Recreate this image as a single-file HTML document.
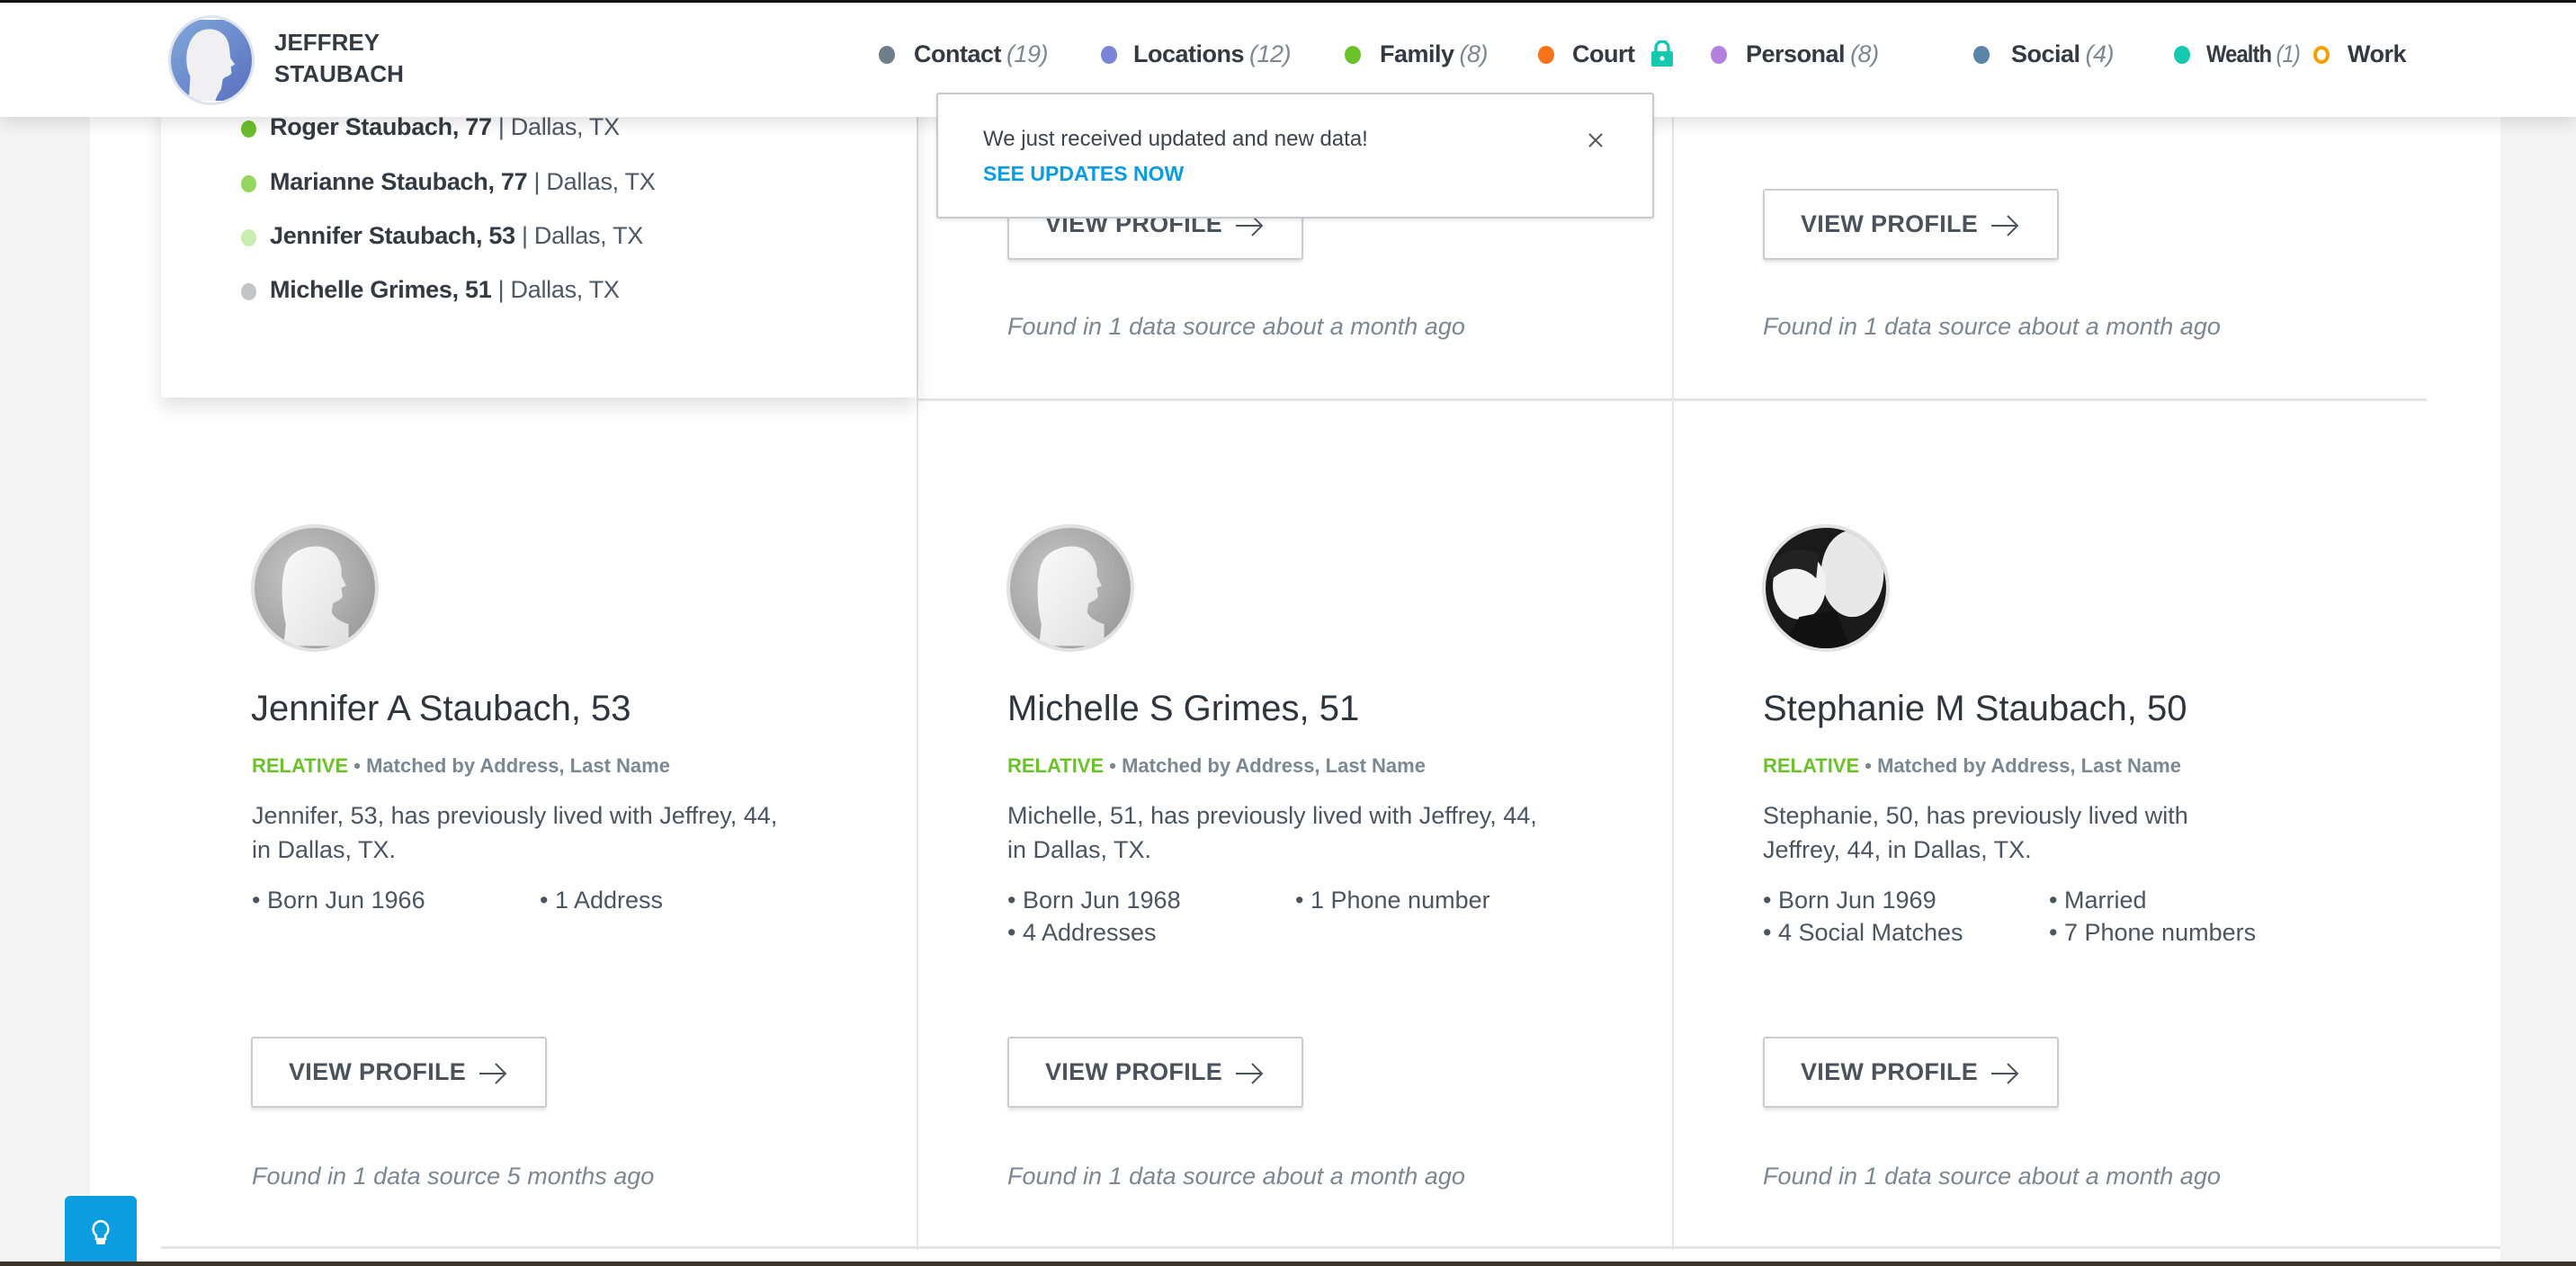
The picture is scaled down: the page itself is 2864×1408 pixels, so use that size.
<!DOCTYPE html>
<html><head><meta charset="utf-8">
<style>
*{margin:0;padding:0;box-sizing:border-box}
body{width:2864px;height:1408px;overflow:hidden;background:#f4f4f4;font-family:"Liberation Sans",sans-serif;position:relative;color:#333a42}
.abs{position:absolute}
#card{left:100px;top:0;width:2680px;height:1408px;background:#fff}
#hdr{left:0;top:0;width:2864px;height:130px;background:#fff;border-top:3px solid #111;box-shadow:0 6px 18px rgba(0,0,0,.13);z-index:5}
.nav{position:absolute;top:42px;font-size:27px;font-weight:bold;color:#333a42;white-space:nowrap;letter-spacing:-0.5px}
.nav i{font-weight:normal;color:#7b8791;margin-left:6px}
.dot{position:absolute;top:48px;width:18px;height:20px;border-radius:50%}
.name{font-size:26px;font-weight:bold;line-height:35px;color:#333a42}
#list{left:179px;top:100px;width:840px;height:342px;background:#fff;box-shadow:0 10px 20px rgba(0,0,0,.12);z-index:2}
.li{position:absolute;left:121px;font-size:27px;white-space:nowrap;color:#333a42;letter-spacing:-0.3px}
.li b{font-weight:bold}
.li span{color:#4d5864}
.ld{position:absolute;left:89px;width:17px;height:19px;border-radius:50%}
.vline{position:absolute;width:2px;background:#e6e6e6}
.hline{position:absolute;height:3px;background:#e4e4e4}
.btn{position:absolute;width:329px;height:79px;border:2px solid #c9ccd0;border-radius:3px;box-shadow:0 3px 3px rgba(0,0,0,.1);background:#fff;font-size:27px;font-weight:bold;color:#4a525c;line-height:75px;padding-left:40px;letter-spacing:.3px}
.btn svg{position:absolute;right:42px;top:26px}
.found{position:absolute;font-size:27px;font-style:italic;color:#7b8791;white-space:nowrap}
.pn{position:absolute;font-size:40px;color:#2f353c;white-space:nowrap}
.rel{position:absolute;font-size:22px;font-weight:bold;color:#7b8791;white-space:nowrap}
.rel b{color:#6cc22a}
.desc{position:absolute;font-size:27px;line-height:38px;color:#4a5560;width:600px}
.bul{position:absolute;font-size:27px;color:#4a5560;white-space:nowrap}
.av{position:absolute;width:142px;height:142px;border-radius:50%;overflow:hidden;border:4px solid #e2e2e2}
</style></head><body>
<div id="card" class="abs"></div>
<div class="vline" style="left:1019px;top:130px;height:1260px"></div>
<div class="vline" style="left:1859px;top:130px;height:1260px"></div>
<div class="hline" style="left:1019px;top:443px;width:1679px"></div>
<div class="hline" style="left:179px;top:1386px;width:2601px"></div>

<div id="list" class="abs">
 <div class="ld" style="top:34px;background:#6cbf2a"></div><div class="li" style="top:26px"><b>Roger Staubach, 77</b> <span>| Dallas, TX</span></div>
 <div class="ld" style="top:95px;background:#95d65e"></div><div class="li" style="top:87px"><b>Marianne Staubach, 77</b> <span>| Dallas, TX</span></div>
 <div class="ld" style="top:155px;background:#c8edb0"></div><div class="li" style="top:147px"><b>Jennifer Staubach, 53</b> <span>| Dallas, TX</span></div>
 <div class="ld" style="top:215px;background:#c2c5c8"></div><div class="li" style="top:207px"><b>Michelle Grimes, 51</b> <span>| Dallas, TX</span></div>
</div>

<div class="btn" style="left:1120px;top:210px">VIEW PROFILE<svg width="32" height="26" viewBox="0 0 32 26"><path d="M1 13H30M19 2L30 13L19 24" fill="none" stroke="#4a525c" stroke-width="2"/></svg></div>
<div class="found" style="left:1120px;top:348px">Found in 1 data source about a month ago</div>
<div class="btn" style="left:1960px;top:210px">VIEW PROFILE<svg width="32" height="26" viewBox="0 0 32 26"><path d="M1 13H30M19 2L30 13L19 24" fill="none" stroke="#4a525c" stroke-width="2"/></svg></div>
<div class="found" style="left:1960px;top:348px">Found in 1 data source about a month ago</div>

<svg width="0" height="0" style="position:absolute"><defs>
<radialGradient id="gg" cx="40%" cy="40%" r="70%"><stop offset="0" stop-color="#c8c8c8"/><stop offset="1" stop-color="#9a9a9a"/></radialGradient>
<linearGradient id="sg" x1="0" y1="0" x2="1" y2="1"><stop offset="0" stop-color="#fafafa"/><stop offset="1" stop-color="#e0e0e0"/></linearGradient>
</defs></svg>

<div class="av" style="left:279px;top:583px"><svg width="134" height="134" viewBox="0 0 100 100"><rect width="100" height="100" fill="url(#gg)"/><path d="M24 98 L26 80 C22 64 22 45 25 33 C29 16 52 12 62 18 C70 23 73 32 72 40 L76 48 L72 50 L73 57 C71 61 67 61 65 63 L64 70 C66 75 72 78 78 80 L78 98 Z" fill="url(#sg)"/></svg></div>
<div class="av" style="left:1119px;top:583px"><svg width="134" height="134" viewBox="0 0 100 100"><rect width="100" height="100" fill="url(#gg)"/><path d="M24 98 L26 80 C22 64 22 45 25 33 C29 16 52 12 62 18 C70 23 73 32 72 40 L76 48 L72 50 L73 57 C71 61 67 61 65 63 L64 70 C66 75 72 78 78 80 L78 98 Z" fill="url(#sg)"/></svg></div>
<div class="av" style="left:1959px;top:583px"><svg width="134" height="134" viewBox="0 0 100 100"><rect width="100" height="100" fill="#1a1a1a"/><ellipse cx="72" cy="38" rx="26" ry="36" fill="#e8e8e8"/><ellipse cx="28" cy="48" rx="22" ry="28" fill="#f2f2f2"/><path d="M4 34 C10 18 30 14 44 22 L42 42 C30 30 16 32 4 44Z" fill="#222"/><path d="M14 100 L28 74 L58 68 L70 100Z" fill="#111"/></svg></div>

<div class="pn" style="left:279px;top:766px">Jennifer A Staubach, 53</div>
<div class="pn" style="left:1120px;top:766px">Michelle S Grimes, 51</div>
<div class="pn" style="left:1960px;top:766px">Stephanie M Staubach, 50</div>

<div class="rel" style="left:280px;top:839px"><b>RELATIVE</b> • Matched by Address, Last Name</div>
<div class="rel" style="left:1120px;top:839px"><b>RELATIVE</b> • Matched by Address, Last Name</div>
<div class="rel" style="left:1960px;top:839px"><b>RELATIVE</b> • Matched by Address, Last Name</div>

<div class="desc" style="left:280px;top:888px">Jennifer, 53, has previously lived with Jeffrey, 44, in Dallas, TX.</div>
<div class="desc" style="left:1120px;top:888px">Michelle, 51, has previously lived with Jeffrey, 44, in Dallas, TX.</div>
<div class="desc" style="left:1960px;top:888px;width:560px">Stephanie, 50, has previously lived with Jeffrey, 44, in Dallas, TX.</div>

<div class="bul" style="left:280px;top:986px">• Born Jun 1966</div>
<div class="bul" style="left:600px;top:986px">• 1 Address</div>
<div class="bul" style="left:1120px;top:986px">• Born Jun 1968</div>
<div class="bul" style="left:1440px;top:986px">• 1 Phone number</div>
<div class="bul" style="left:1120px;top:1022px">• 4 Addresses</div>
<div class="bul" style="left:1960px;top:986px">• Born Jun 1969</div>
<div class="bul" style="left:2278px;top:986px">• Married</div>
<div class="bul" style="left:1960px;top:1022px">• 4 Social Matches</div>
<div class="bul" style="left:2278px;top:1022px">• 7 Phone numbers</div>

<div class="btn" style="left:279px;top:1153px">VIEW PROFILE<svg width="32" height="26" viewBox="0 0 32 26"><path d="M1 13H30M19 2L30 13L19 24" fill="none" stroke="#4a525c" stroke-width="2"/></svg></div>
<div class="btn" style="left:1120px;top:1153px">VIEW PROFILE<svg width="32" height="26" viewBox="0 0 32 26"><path d="M1 13H30M19 2L30 13L19 24" fill="none" stroke="#4a525c" stroke-width="2"/></svg></div>
<div class="btn" style="left:1960px;top:1153px">VIEW PROFILE<svg width="32" height="26" viewBox="0 0 32 26"><path d="M1 13H30M19 2L30 13L19 24" fill="none" stroke="#4a525c" stroke-width="2"/></svg></div>

<div class="found" style="left:280px;top:1293px">Found in 1 data source 5 months ago</div>
<div class="found" style="left:1120px;top:1293px">Found in 1 data source about a month ago</div>
<div class="found" style="left:1960px;top:1293px">Found in 1 data source about a month ago</div>

<div id="hdr" class="abs">
 <div style="position:absolute;left:187px;top:14px;width:96px;height:100px;border-radius:50%;overflow:hidden;border:3px solid #dfe3ea">
  <svg width="90" height="94" viewBox="0 0 100 100"><defs><linearGradient id="bg" x1="0" y1="0" x2="1" y2="1"><stop offset="0" stop-color="#7fa8d8"/><stop offset="1" stop-color="#5a6fc0"/></linearGradient></defs><rect width="100" height="100" fill="url(#bg)"/><path d="M22 100 L24 70 C16 55 18 30 30 18 C42 8 60 10 68 22 C74 32 72 42 74 48 L79 55 L74 58 L75 66 C72 70 66 70 64 74 L62 86 C58 92 56 96 55 100Z" fill="#f0f0f2"/></svg>
 </div>
 <div class="name" style="position:absolute;left:305px;top:27px">JEFFREY<br>STAUBACH</div>
 <div class="dot" style="left:977px;background:#6f7f8a"></div><div class="nav" style="left:1016px">Contact<i>(19)</i></div>
 <div class="dot" style="left:1224px;background:#7b85d8"></div><div class="nav" style="left:1260px">Locations<i>(12)</i></div>
 <div class="dot" style="left:1495px;background:#6cc22a"></div><div class="nav" style="left:1534px">Family<i>(8)</i></div>
 <div class="dot" style="left:1710px;background:#f97316"></div><div class="nav" style="left:1748px">Court</div>
 <svg style="position:absolute;left:1835px;top:42px" width="26" height="30" viewBox="0 0 26 30"><path d="M6 13V8a7 7 0 0 1 14 0v5" fill="none" stroke="#14c9b0" stroke-width="3.5"/><rect x="1" y="12" width="24" height="17" rx="2" fill="#14c9b0"/><circle cx="13" cy="20" r="2.5" fill="#fff"/></svg>
 <div class="dot" style="left:1902px;background:#b57fdf"></div><div class="nav" style="left:1941px">Personal<i>(8)</i></div>
 <div class="dot" style="left:2194px;background:#5b84a8"></div><div class="nav" style="left:2236px">Social<i>(4)</i></div>
 <div class="dot" style="left:2417px;background:#14c9b0"></div><div class="nav" style="left:2453px;letter-spacing:-1px;transform:scaleX(0.88);transform-origin:left">Wealth<i>(1)</i></div>
 <div class="dot" style="left:2572px;border:4px solid #f5a000"></div><div class="nav" style="left:2610px">Work</div>
</div>

<div class="abs" style="left:1041px;top:103px;width:798px;height:140px;background:#fff;border:2px solid #c5c9cd;border-radius:3px;box-shadow:0 2px 4px rgba(0,0,0,.1);z-index:6">
 <div style="position:absolute;left:50px;top:36px;font-size:24px;color:#3c444d">We just received updated and new data!</div>
 <div style="position:absolute;left:50px;top:75px;font-size:23px;font-weight:bold;color:#0a9be0">SEE UPDATES NOW</div>
 <svg style="position:absolute;left:722px;top:42px" width="18" height="18" viewBox="0 0 18 18"><path d="M2 2L16 16M16 2L2 16" stroke="#555" stroke-width="2"/></svg>
</div>

<div class="abs" style="left:72px;top:1330px;width:80px;height:78px;background:#0b9de0;border-radius:6px 6px 0 0;z-index:7">
 <svg style="position:absolute;left:28px;top:26px" width="24" height="30" viewBox="0 0 24 30"><path d="M12 2a9 9 0 0 0-5 16v4h10v-4A9 9 0 0 0 12 2z" fill="none" stroke="#fff" stroke-width="2.5"/><rect x="7" y="22" width="10" height="6" rx="2" fill="#fff"/></svg>
</div>
<div class="abs" style="left:0;top:1403px;width:2864px;height:5px;background:#3a3528;z-index:8"></div>
</body></html>
